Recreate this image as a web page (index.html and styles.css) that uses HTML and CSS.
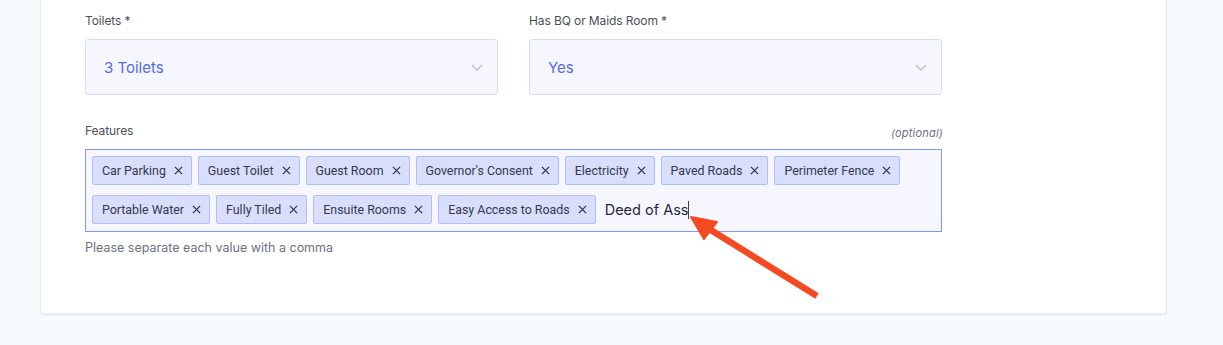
FILE: index.html
```html
<!DOCTYPE html>
<html>
<head>
<meta charset="utf-8">
<link rel="stylesheet" href="styles.css">
</head>
<body>
<div class="page">
  <div class="card">
    <div class="row">
      <div class="field">
        <div class="label">Toilets *</div>
        <div class="select"><span>3 Toilets</span>
          <svg class="chev" width="12" height="7" viewBox="0 0 12 7"><path d="M1 1l5 5 5-5" fill="none" stroke="#c4c6cc" stroke-width="1.6"/></svg>
        </div>
      </div>
      <div class="field">
        <div class="label">Has BQ or Maids Room *</div>
        <div class="select"><span>Yes</span>
          <svg class="chev" width="12" height="7" viewBox="0 0 12 7"><path d="M1 1l5 5 5-5" fill="none" stroke="#c4c6cc" stroke-width="1.6"/></svg>
        </div>
      </div>
    </div>
    <div class="features">
      <div class="label-row"><span class="label">Features</span><span class="optional">(optional)</span></div>
      <div class="tagbox">
        <span class="tag">Car Parking<svg viewBox="0 0 10 10"><path d="M1 1l8 8M9 1l-8 8"/></svg></span>
        <span class="tag">Guest Toilet<svg viewBox="0 0 10 10"><path d="M1 1l8 8M9 1l-8 8"/></svg></span>
        <span class="tag">Guest Room<svg viewBox="0 0 10 10"><path d="M1 1l8 8M9 1l-8 8"/></svg></span>
        <span class="tag">Governor's Consent<svg viewBox="0 0 10 10"><path d="M1 1l8 8M9 1l-8 8"/></svg></span>
        <span class="tag">Electricity<svg viewBox="0 0 10 10"><path d="M1 1l8 8M9 1l-8 8"/></svg></span>
        <span class="tag">Paved Roads<svg viewBox="0 0 10 10"><path d="M1 1l8 8M9 1l-8 8"/></svg></span>
        <span class="tag">Perimeter Fence<svg viewBox="0 0 10 10"><path d="M1 1l8 8M9 1l-8 8"/></svg></span>
        <span class="tag">Portable Water<svg viewBox="0 0 10 10"><path d="M1 1l8 8M9 1l-8 8"/></svg></span>
        <span class="tag">Fully Tiled<svg viewBox="0 0 10 10"><path d="M1 1l8 8M9 1l-8 8"/></svg></span>
        <span class="tag">Ensuite Rooms<svg viewBox="0 0 10 10"><path d="M1 1l8 8M9 1l-8 8"/></svg></span>
        <span class="tag">Easy Access to Roads<svg viewBox="0 0 10 10"><path d="M1 1l8 8M9 1l-8 8"/></svg></span>
        <span class="typed">Deed of Ass<span class="caret"></span></span>
      </div>
      <div class="help">Please separate each value with a comma</div>
    </div>
  </div>
  <svg class="arrow" width="1223" height="345" viewBox="0 0 1223 345">
    <line x1="706" y1="227" x2="817" y2="296" stroke="#f44a22" stroke-width="6.5"/>
    <polygon points="691,217 717,222 704,239" fill="#f44a22" stroke="#f44a22" stroke-width="2" stroke-linejoin="round"/>
  </svg>
</div>
</body>
</html>
```
FILE: styles.css
```css
html, body {
  margin: 0;
  padding: 0;
  background: #f7fbfe;
}
body {
  font-family: Inter, "Noto Sans", sans-serif;
}
.page {
  position: relative;
  width: 1223px;
  height: 345px;
  overflow: hidden;
}
.card {
  margin: 0 0 0 40px;
  width: 1127px;
  box-sizing: border-box;
  background: #fff;
  border: 1px solid #e6e8ec;
  border-top: none;
  border-radius: 0 0 3px 3px;
  box-shadow: 0 2px 0 #eef0f3;
  padding: 13px 0 57px 44px;
  height: 314px;
}
.row {
  display: flex;
  gap: 31px;
}
.field {
  width: 413px;
}
.label {
  font-size: 12px;
  line-height: 16px;
  color: #4b4f58;
  letter-spacing: -0.1px;
}
.field .label {
  margin-bottom: 10px;
}
.select {
  height: 54px;
  border: 1px solid #d7dcfa;
  border-radius: 3px;
  background: #f5f6fe;
  display: flex;
  align-items: center;
  justify-content: space-between;
  padding: 0 14px 0 18px;
  font-size: 15px;
  color: #5469ee;
}
.features {
  margin-top: 27px;
  width: 857px;
}
.label-row {
  display: flex;
  justify-content: space-between;
  align-items: flex-end;
  height: 18px;
  margin-bottom: 9px;
}
.label-row .label {
  line-height: 16px;
  padding-bottom: 1px;
}
.optional {
  font-size: 11px;
  font-style: italic;
  color: #6b7080;
  letter-spacing: 0.2px;
  margin-right: -1px;
}
.tagbox {
  border: 1px solid #8196f3;
  background: #f5f6fe;
  padding: 6px 6px 7px 6px;
  display: flex;
  flex-wrap: wrap;
  gap: 10px 6px;
  align-items: center;
}
.tag {
  display: inline-flex;
  align-items: center;
  height: 27px;
  padding: 0 8px 0 9px;
  background: #d9defb;
  border: 1px solid #b2befa;
  border-radius: 2px;
  font-family: Roboto, "Noto Sans", sans-serif;
  font-size: 12.4px;
  color: #333a4d;
  white-space: nowrap;
}
.tag svg {
  width: 9px;
  height: 9px;
  margin-left: 8px;
  fill: none;
  stroke: #2f3548;
  stroke-width: 1.4;
}
.typed {
  display: inline-flex;
  align-items: center;
  font-size: 14.5px;
  color: #1f2640;
  margin-left: 3px;
  height: 29px;
}
.caret {
  display: inline-block;
  width: 1px;
  height: 18px;
  background: #3a4050;
}
.help {
  margin-top: 8px;
  font-size: 12.5px;
  line-height: 16px;
  color: #6b7280;
}
.arrow {
  position: absolute;
  left: 0;
  top: 0;
  pointer-events: none;
}
```
